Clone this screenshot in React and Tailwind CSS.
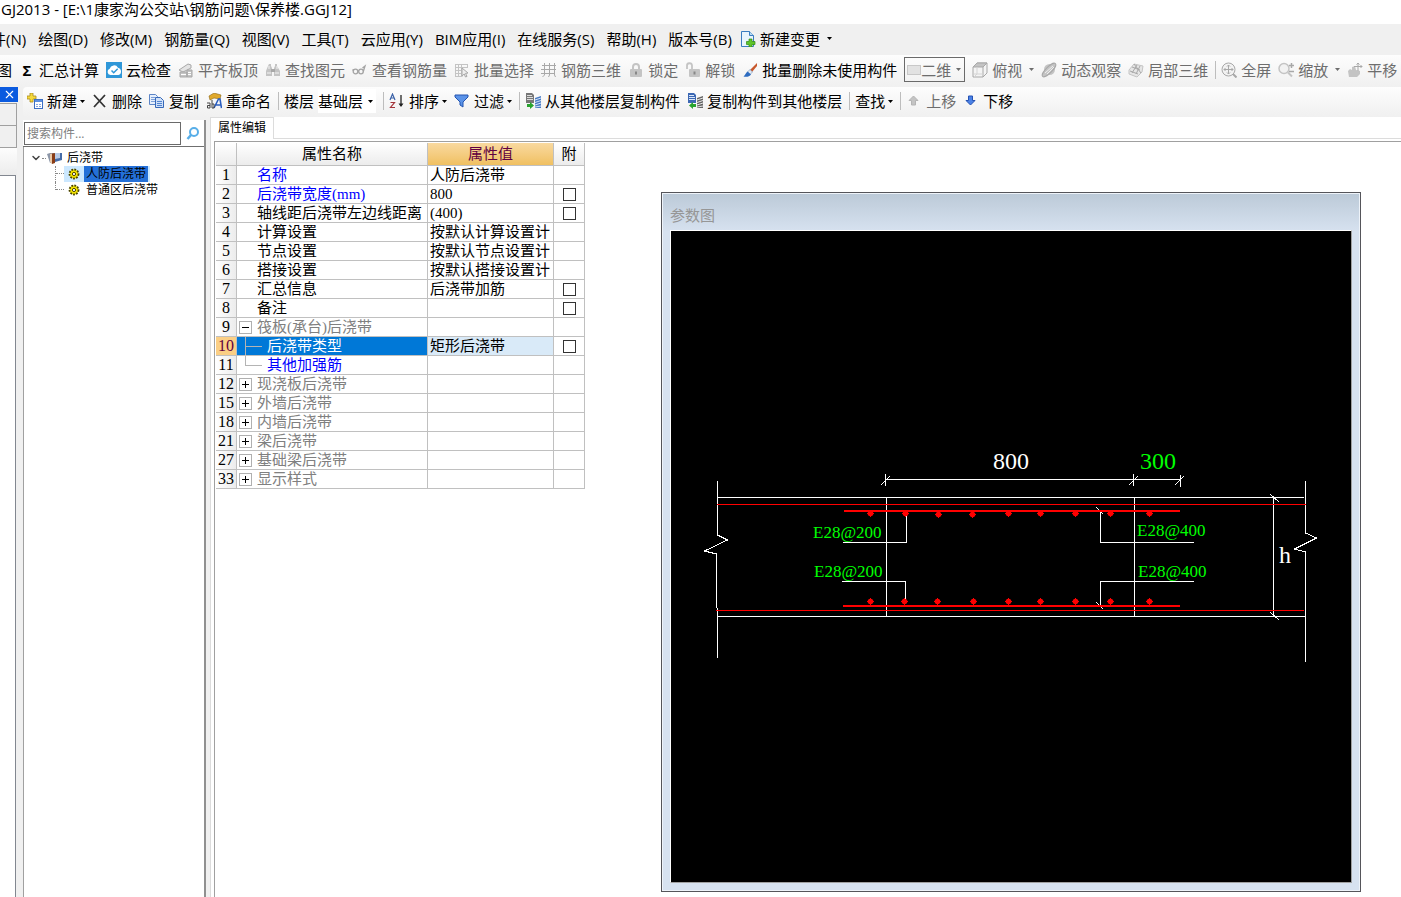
import { useState } from "react";
import { ChevronDown, X } from "lucide-react";

const MENUS = [
  "绘图(D)",
  "修改(M)",
  "钢筋量(Q)",
  "视图(V)",
  "工具(T)",
  "云应用(Y)",
  "BIM应用(I)",
  "在线服务(S)",
  "帮助(H)",
  "版本号(B)",
];

const ROWS = [
  { no: 1, name: "名称", value: "人防后浇带", color: "blue" },
  { no: 2, name: "后浇带宽度(mm)", value: "800", color: "blue", check: true },
  { no: 3, name: "轴线距后浇带左边线距离", value: "(400)", check: true },
  { no: 4, name: "计算设置", value: "按默认计算设置计" },
  { no: 5, name: "节点设置", value: "按默认节点设置计" },
  { no: 6, name: "搭接设置", value: "按默认搭接设置计" },
  { no: 7, name: "汇总信息", value: "后浇带加筋", check: true },
  { no: 8, name: "备注", value: "", check: true },
  { no: 9, name: "筏板(承台)后浇带", value: "", color: "gray", toggle: "-" },
  { no: 10, name: "后浇带类型", value: "矩形后浇带", child: true, check: true },
  { no: 11, name: "其他加强筋", value: "", color: "blue", child: true, last: true },
  { no: 12, name: "现浇板后浇带", value: "", color: "gray", toggle: "+" },
  { no: 15, name: "外墙后浇带", value: "", color: "gray", toggle: "+" },
  { no: 18, name: "内墙后浇带", value: "", color: "gray", toggle: "+" },
  { no: 21, name: "梁后浇带", value: "", color: "gray", toggle: "+" },
  { no: 27, name: "基础梁后浇带", value: "", color: "gray", toggle: "+" },
  { no: 33, name: "显示样式", value: "", color: "gray", toggle: "+" },
];

const NAME_COLORS = {
  blue: "text-[#0000ff]",
  gray: "text-[#808080]",
};

/* ---------- icons ---------- */

const G = "#c4c4c4";
const D = "#a8a8a8";

const ICONS = {
  cloud: (
    <>
      <rect width="16" height="16" fill="#2f97d8" />
      <path d="M4.5 13a3.2 3.2 0 0 1-.8-6.2A4.5 4.5 0 0 1 12 5.700a3.800 3.800 0 0 1 .5 7.300z" fill="#fff" />
      <path d="M5.500 8.500l2.200 2.200 4-4" fill="none" stroke="#2f97d8" strokeWidth="1.500" />
    </>
  ),
  align: (
    <>
      <path d="M1 8l9-6 3 1v3l-8 4z" fill="#e4e4e4" stroke={D} />
      <path d="M2 10h7v5H2zM9 8h5v7H9z" fill={G} stroke={D} />
      <path d="M3 12.500h5M10 10.500h3M10 12.500h3" stroke="#fff" />
    </>
  ),
  binoculars: (
    <>
      <path d="M4 2h2v2l1 2v8H1v-5l2-5zM10 2h2v2l3 5v5H9V6l1-2z" fill={G} />
      <path d="M6 7h4v3H6z" fill={D} />
      <path d="M2 11h4M10 11h4M4 4v3M12 4v3" stroke="#f4f4f4" />
    </>
  ),
  glasses: (
    <g fill="none" stroke="#a4a4a4" strokeWidth="1.300">
      <circle cx="3.500" cy="9.500" r="2.300" />
      <circle cx="9" cy="9.500" r="2.300" />
      <path d="M1.200 9V7M11.300 9.500L13 4l-2.500 2M6 9h1" />
    </g>
  ),
  gridPick: (
    <>
      <path d="M1.500 2.500h12M1.500 5.500h12M1.500 8.500h7M1.500 11.500h7M1.500 14.500h7M1.500 2v13M4.500 2v13M7.500 2v13M13.500 2v4" stroke={G} fill="none" />
      <path d="M8 6l6 5-2.500.4 1.500 3-1.500.6-1.300-3L8 14z" fill="#eee" stroke={D} />
    </>
  ),
  mesh: (
    <path d="M1 3.500h14M0 7.500h15M0 11.500h14M3.500 1v12l-2 2M8.500 1v12l-1 2M13.500 1v12l1 2" stroke={D} fill="none" />
  ),
  lock: (
    <>
      <path d="M5 8V5a3 3 0 0 1 6 0v3" fill="none" stroke={G} strokeWidth="2" />
      <rect x="2" y="7" width="12" height="8" rx="1" fill={G} />
      <path d="M8 9.500v3" stroke="#888" strokeWidth="2" />
    </>
  ),
  unlock: (
    <>
      <path d="M2 7V4a2.500 2.500 0 0 1 5-.500v4" fill="none" stroke={G} strokeWidth="1.800" />
      <rect x="4" y="7" width="11" height="8" rx="1" fill={G} />
      <path d="M9.500 9.500v3" stroke="#888" strokeWidth="2" />
    </>
  ),
  brush: (
    <>
      <path d="M15 1L8 8l2 2 5-6z" fill="#c8582c" />
      <path d="M8 7.500L10.500 10 8 12.500 5.500 10z" fill="#dfe8f2" stroke="#6f8fb5" strokeWidth=".6" />
      <path d="M5.500 9.500L9 12.500C7.500 15 4 15 1.500 14.500 3.500 13 3.500 11 5.500 9.500z" fill="#2d6cc0" />
    </>
  ),
  cube: (
    <>
      <path d="M1 5l4-4h10v10l-4 4H1z" fill="#f4f4f4" stroke={D} />
      <path d="M1 5l4-4h10l-4 4z" fill={G} stroke={D} />
      <path d="M11 5v10" stroke={D} />
      <path d="M5 5v7M2 12h9M5 12l-3 3" stroke="#d4d4d4" />
    </>
  ),
  orbit: (
    <>
      <circle cx="8.500" cy="7.500" r="5.500" fill={G} />
      <ellipse cx="8" cy="8" rx="9" ry="3" transform="rotate(-45 8 8)" fill={G} stroke={D} />
      <path d="M4 11l8-7M6 12l7-7" stroke="#eee" />
    </>
  ),
  partial: (
    <>
      <path d="M1 8l5-6 9 2-1 6-5 5-8-3z" fill="#e6e6e6" stroke={G} />
      <path d="M4 5l8 3M2 9l8 3M9 3l-5 8M12 4l-4 8M6 2l7 9" stroke={D} fill="none" />
    </>
  ),
  fullscreen: (
    <>
      <circle cx="7.500" cy="7.500" r="6.500" fill="#f2f2f2" stroke={D} />
      <path d="M7.500 3v9M3 7.500h9M6 4.500L7.500 3 9 4.500M6 10.500L7.500 12 9 10.500M4.500 6L3 7.500 4.500 9M10.500 6L12 7.500 10.500 9" stroke={D} fill="none" />
      <path d="M12 12l3.500 3.500" stroke={D} strokeWidth="2" />
    </>
  ),
  zoom: (
    <>
      <circle cx="6" cy="6.500" r="5" fill="#f2f2f2" stroke={G} strokeWidth="1.500" />
      <path d="M10 10.500l4 4" stroke={G} strokeWidth="2" />
      <path d="M11 3.500h5M13.500 1v5M11 9.500h5" stroke={D} strokeWidth="1.500" />
    </>
  ),
  pan: (
    <>
      <path d="M2 15l-1-6 2-2 2 1V5l3-1 1 4 4 1v3l-3 3z" fill={G} />
      <path d="M11 1v8M7 4.500h8M9.500 2.500L11 1l1.500 1.500M13.500 3L15 4.500 13.500 6" stroke={D} fill="none" />
    </>
  ),
  create: (
    <>
      <path d="M3 0h3v3h3v3H6v3H3V6H0V3h3z" fill="#f5d93c" stroke="#a98a1e" strokeWidth=".8" />
      <rect x="7.500" y="6.500" width="8" height="9" fill="#fff" stroke="#3b6fc4" />
      <path d="M8 7h7v2H8z" fill="#5b8fe0" />
      <path d="M9 11.500h2M12 11.500h2M9 13.500h2M12 13.500h2" stroke="#86a6dc" />
    </>
  ),
  remove: (
    <path d="M2 2l11 12M13 2L2 14" stroke="#333" strokeWidth="1.800" fill="none" />
  ),
  copy: (
    <>
      <path d="M.5 1.500h6l2 2v8h-8z" fill="#e6effb" stroke="#5c85c7" />
      <path d="M2 4.500h4M2 6.500h4M2 8.500h4" stroke="#7ca0da" />
      <path d="M6.500 4.500h5l3 3v7h-8z" fill="#cfe0f8" stroke="#3668b8" />
      <path d="M8 8.500h5M8 10.500h5M8 12.500h5" stroke="#5384cf" />
    </>
  ),
  rename: (
    <>
      <path d="M3 3l5-3 7 2-1 4-6-1-4 2z" fill="#e0a92d" stroke="#8c6412" strokeWidth=".6" />
      <path d="M8 15l4.500-9h1.500l1.500 9M10 12h5" stroke="#2c5fc0" strokeWidth="1.600" fill="none" />
      <path d="M1 10h3v5H1.500v-2.500H4M6 7v8h2v-4H6" stroke="#444" fill="none" />
    </>
  ),
  sort: (
    <>
      <path d="M1 7l2.500-6L6 7M2 5h3" stroke="#3b62a8" fill="none" strokeWidth="1.200" />
      <path d="M1.500 9.500h4l-4 5h4.500" stroke="#a3343a" fill="none" strokeWidth="1.200" />
      <path d="M12 2v11" stroke="#222" strokeWidth="1.300" />
      <path d="M9.500 10.500h5L12 14z" fill="#222" />
    </>
  ),
  filter: (
    <path d="M1 2h13v2L9 9v5l-3-2V9L1 4z" fill="#5b93e8" stroke="#2455b0" />
  ),
  fromFloor: (
    <>
      <path d="M1 0h6l2 2v8H1z" fill="#777" />
      <path d="M2 2.500h5M2 4.500h6M2 6.500h6" stroke="#ddd" />
      <path d="M2 11h3v-2l4 3.500-4 3.500v-2H2z" fill="#29a32f" />
      <path d="M10 5l6-2v12h-6z" fill="#4a7cc4" />
      <path d="M10 7l6-2M10 9.500l6-2M10 12l6-2M10 14l6-1" stroke="#d4e3f8" />
    </>
  ),
  toFloor: (
    <>
      <path d="M1 0h6l2 2v8H1z" fill="#3c68b4" />
      <path d="M2 2.500h5M2 4.500h6M2 6.500h6" stroke="#dce8fa" />
      <path d="M9 11H6V9l-4 3.500L6 16v-2h3z" fill="#29a32f" />
      <path d="M10 5l6-2v12h-6z" fill="#666" />
      <path d="M10 7l6-2M10 9.500l6-2M10 12l6-2M10 14l6-1" stroke="#e8e8e8" />
    </>
  ),
  up: <path d="M7.500 3L12 7.500H9.500V12h-4V7.500H3z" fill={G} stroke="#b4b4b4" />,
  down: <path d="M7.500 12L12 7.500H9.500V3h-4v4.500H3z" fill="#4b82e6" stroke="#2452b4" />,
  change: (
    <>
      <path d="M1.500.5h8l4 4v11h-12z" fill="#e8f4fd" stroke="#3a7cc0" />
      <path d="M9.500.5v4h4" fill="#b9dcf4" stroke="#3a7cc0" />
      <path d="M9 8h3v2.500h3v3h-3V16H9v-2.500H6.500v-3H9z" fill="#5fc42a" stroke="#2f8a12" strokeWidth=".7" />
    </>
  ),
  search: (
    <>
      <circle cx="9" cy="7" r="4" fill="none" stroke="#58aee8" strokeWidth="2" />
      <path d="M6 10l-3.500 4" stroke="#58aee8" strokeWidth="2.500" />
    </>
  ),
  band: (
    <>
      <path d="M0 4l3-1h4v9l-4 1z" fill="#8c96a8" />
      <path d="M3 4l5-1v10l-3 1z" fill="#8a3d16" />
      <path d="M3 4l2-.5V14l-2-2z" fill="#e9c9a8" />
      <path d="M8 3h7v7l-7 2z" fill="#456ca8" />
      <path d="M8 3h5v5l-5 1z" fill="#b9cbe6" />
    </>
  ),
  gear: (
    <>
      <circle cx="6" cy="6" r="4.500" fill="#f4e400" stroke="#4a4400" strokeWidth="1.800" strokeDasharray="1.800 1.200" />
      <circle cx="6" cy="6" r="1.600" fill="#fff" stroke="#4a4400" />
    </>
  ),
};

const Icon = ({ name, size = 16 }) => (
  <svg
    width={size}
    height={size}
    viewBox={size === 12 ? "0 0 12 12" : "0 0 16 16"}
    className="shrink-0"
    aria-hidden="true"
  >
    {ICONS[name]}
  </svg>
);

const Caret = () => (
  <svg width="5" height="3" viewBox="0 0 5 3" className="shrink-0" aria-hidden="true">
    <path d="M0 0h5L2.500 3z" fill="currentColor" />
  </svg>
);

/* ---------- toolbars ---------- */

const ToolButton = ({ icon, disabled, caret, wide, children }) => (
  <button
    type="button"
    disabled={disabled}
    className="flex items-center gap-1 shrink-0 whitespace-nowrap disabled:text-[#6d6d6d]"
  >
    {icon && <Icon name={icon} />}
    <span className={`flex items-center ${wide ? "gap-[7px]" : "gap-[3px]"}`}>
      {children}
      {caret && <Caret />}
    </span>
  </button>
);

const Separator = () => <span className="w-px h-[18px] -mr-0.5 shrink-0 bg-[#bdbdbd]" />;

const MenuBar = () => (
  <nav className="flex items-center gap-3 h-[31px] pb-0.5 bg-[#f0f0f0] whitespace-nowrap overflow-hidden">
    <button type="button" className="-ml-6 shrink-0">
      文件(N)
    </button>
    {MENUS.map((menu) => (
      <button type="button" key={menu} className="shrink-0">
        {menu}
      </button>
    ))}
    <button type="button" className="flex items-center gap-1 -ml-1 shrink-0">
      <Icon name="change" />
      <span className="flex items-center gap-[7px]">
        新建变更
        <Caret />
      </span>
    </button>
  </nav>
);

const ViewToolbar = () => (
  <div className="flex items-center gap-[7px] h-8 -ml-[3px] pb-[3px] bg-linear-to-b from-[#fdfdfd] to-[#f0f0f0] overflow-hidden">
    <ToolButton>图</ToolButton>
    <button type="button" className="flex items-center gap-1 shrink-0">
      <span className="w-4 text-center font-bold">Σ</span>
      汇总计算
    </button>
    <ToolButton icon="cloud">云检查</ToolButton>
    <ToolButton icon="align" disabled>平齐板顶</ToolButton>
    <ToolButton icon="binoculars" disabled>查找图元</ToolButton>
    <ToolButton icon="glasses" disabled>查看钢筋量</ToolButton>
    <ToolButton icon="gridPick" disabled>批量选择</ToolButton>
    <ToolButton icon="mesh" disabled>钢筋三维</ToolButton>
    <ToolButton icon="lock" disabled>锁定</ToolButton>
    <ToolButton icon="unlock" disabled>解锁</ToolButton>
    <ToolButton icon="brush">批量删除未使用构件</ToolButton>
    <div className="relative flex items-center w-[61px] h-[25px] shrink-0 border border-[#6a6a6a] text-[#6d6d6d]">
      <span className="w-[14px] h-[10px] ml-0.5 shrink-0 border border-[#c8c8c8] bg-[#e2e2e2]" />
      <select aria-label="视图模式" disabled className="appearance-none w-full bg-transparent outline-none">
        <option>二维</option>
      </select>
      <span className="absolute right-[3px] pointer-events-none">
        <Caret />
      </span>
    </div>
    <ToolButton icon="cube" disabled caret wide>俯视</ToolButton>
    <ToolButton icon="orbit" disabled>动态观察</ToolButton>
    <ToolButton icon="partial" disabled>局部三维</ToolButton>
    <Separator />
    <ToolButton icon="fullscreen" disabled>全屏</ToolButton>
    <ToolButton icon="zoom" disabled caret wide>缩放</ToolButton>
    <ToolButton icon="pan" disabled>平移</ToolButton>
  </div>
);

const ComponentToolbar = () => (
  <div className="flex items-center gap-[7px] h-[30px] pl-1 pb-0.5 rounded-l bg-linear-to-b from-[#fdfdfd] to-[#f0f0f0] overflow-hidden">
    <ToolButton icon="create" caret>新建</ToolButton>
    <ToolButton icon="remove">删除</ToolButton>
    <ToolButton icon="copy">复制</ToolButton>
    <ToolButton icon="rename">重命名</ToolButton>
    <Separator />
    <label className="flex items-center gap-1 shrink-0">
      楼层
      <span className="relative flex items-center w-[58px] h-6 bg-white">
        <select className="appearance-none w-full h-full outline-none">
          <option>基础层</option>
        </select>
        <span className="absolute right-[3px] pointer-events-none">
          <Caret />
        </span>
      </span>
    </label>
    <Separator />
    <ToolButton icon="sort" caret>排序</ToolButton>
    <ToolButton icon="filter" caret>过滤</ToolButton>
    <Separator />
    <ToolButton icon="fromFloor">从其他楼层复制构件</ToolButton>
    <ToolButton icon="toFloor">复制构件到其他楼层</ToolButton>
    <Separator />
    <ToolButton caret>查找</ToolButton>
    <Separator />
    <ToolButton icon="up" disabled>上移</ToolButton>
    <ToolButton icon="down">下移</ToolButton>
  </div>
);

/* ---------- panels ---------- */

const Dock = () => (
  <aside className="flex flex-col w-[18px] shrink-0">
    <button type="button" aria-label="关闭" className="flex items-center justify-center h-[15px] bg-[#0a5adf] text-white">
      <X size={13} strokeWidth={2} />
    </button>
    <div className="w-[17px] h-[22px] mt-px border-t border-r border-[#a0a0a0]" />
    <div className="w-[17px] h-[22px] border-t border-r border-[#a0a0a0]" />
    <div className="w-[17px] h-[28px] border-t border-[#a0a0a0] bg-linear-to-b from-[#fdfdfd] to-[#ececec]" />
    <div className="flex-1 w-4 border-t border-r border-[#828790] bg-white" />
  </aside>
);

const ComponentTree = () => {
  const [selected, setSelected] = useState("人防后浇带");

  return (
    <section className="flex flex-col w-[183px] mt-[3px] shrink-0 border-r-2 border-[#909090] bg-white text-xs">
      <div className="flex items-center h-[27px] pl-px shrink-0 border-b border-[#6f6f6f]">
        <input
          type="text"
          aria-label="搜索构件"
          placeholder="搜索构件..."
          className="w-[157px] h-[23px] px-0.5 border border-[#6a6a6a] bg-white outline-none placeholder:text-[#808080]"
        />
        <button type="button" aria-label="搜索" className="flex flex-1 items-center justify-center">
          <Icon name="search" />
        </button>
      </div>
      <div className="pt-[3px] pl-1.5 border-l border-[#a0a0a0] flex-1">
        <div className="flex items-center h-4">
          <ChevronDown size={12} strokeWidth={3} className="text-[#444]" />
          <span className="w-1 mr-px border-t border-dotted border-[#888]" />
          <Icon name="band" />
          <span className="ml-1">后浇带</span>
        </div>
        <ul className="ml-[25px]">
          {["人防后浇带", "普通区后浇带"].map((item, i) => (
            <li key={item} className="flex h-4">
              <span
                className={`w-px border-l border-dotted border-[#888] ${i === 0 ? "h-4" : "h-2"}`}
              />
              <span className="w-2 h-2 border-b border-dotted border-[#888]" />
              <button
                type="button"
                onClick={() => setSelected(item)}
                className={`flex items-center h-4 pl-1 pr-0.5 leading-4 ${
                  item === selected ? "bg-[#cce8ff]" : ""
                }`}
              >
                <Icon name="gear" size={12} />
                <span
                  className={`ml-1 px-0.5 ${item === selected ? "bg-[#2470d8]" : ""}`}
                >
                  {item}
                </span>
              </button>
            </li>
          ))}
        </ul>
      </div>
    </section>
  );
};

const PropertyRow = ({ row, active, onSelect }) => {
  const cell = "h-[19px] p-0 border-r border-b border-[#c0c0c0] font-normal";
  const nameColor = active ? "text-white" : NAME_COLORS[row.color] || "text-black";

  return (
    <tr onClick={() => onSelect(row.no)}>
      <th
        scope="row"
        className={`${cell} text-center text-base/[18px] ${
          active ? "bg-[#fbcf85] text-[#600040]" : "bg-linear-to-r from-white to-[#ececec]"
        }`}
      >
        {row.no}
      </th>
      <td className={`${cell} ${active ? "bg-[#0078d7]" : ""} ${nameColor}`}>
        <div className="flex items-center h-[18px]">
          {row.toggle && (
            <button
              type="button"
              aria-label={row.toggle === "+" ? "展开" : "折叠"}
              className="flex items-center justify-center w-[13px] h-[13px] ml-0.5 mr-[5px] border border-[#b0b0b0] bg-white text-black"
            >
              <svg width="7" height="7" viewBox="0 0 7 7" shapeRendering="crispEdges">
                <path d={row.toggle === "+" ? "M0 3h7v1H0zM3 0h1v7H3z" : "M0 3h7v1H0z"} />
              </svg>
            </button>
          )}
          {row.child && (
            <svg width="17" height="18" viewBox="0 0 17 18" className="ml-2 mr-[5px]" shapeRendering="crispEdges">
              <path
                d={row.last ? "M.5 0v9.500H17" : "M.5 0v18M.5 9.500H17"}
                fill="none"
                stroke="#b4b4b4"
              />
            </svg>
          )}
          <span className={`whitespace-nowrap ${row.toggle || row.child ? "" : "ml-5"}`}>
            {row.name}
          </span>
        </div>
      </td>
      <td className={`${cell} pl-0.5 whitespace-nowrap overflow-hidden ${active ? "bg-[#d9eaf8]" : ""}`}>
        {row.value}
      </td>
      <td className={cell}>
        {row.check && (
          <input
            type="checkbox"
            aria-label={`${row.name} 附加`}
            className="block appearance-none w-[13px] h-[13px] mx-auto border border-[#333] bg-white checked:bg-[#333]"
          />
        )}
      </td>
    </tr>
  );
};

const PropertyTable = () => {
  const [current, setCurrent] = useState(10);
  const head = "h-[23px] p-0 border-r border-b border-[#c0c0c0] font-normal";

  return (
    <table className="table-fixed w-[369px] border-separate border-spacing-0 font-['Liberation_Serif','Noto_Sans_CJK_SC',serif] text-[15px]/[18px]">
      <colgroup>
        <col className="w-[21px]" />
        <col className="w-[191px]" />
        <col className="w-[126px]" />
        <col className="w-[31px]" />
      </colgroup>
      <thead>
        <tr>
          <th className={`${head} bg-linear-to-b from-white to-[#ececec]`}></th>
          <th className={`${head} bg-linear-to-b from-white to-[#ececec]`}>属性名称</th>
          <th className={`${head} bg-linear-to-b from-[#f9d99f] to-[#f0c060] text-[#600040]`}>属性值</th>
          <th className={`${head} bg-linear-to-b from-white to-[#ececec]`}>附</th>
        </tr>
      </thead>
      <tbody>
        {ROWS.map((row) => (
          <PropertyRow key={row.no} row={row} active={row.no === current} onSelect={setCurrent} />
        ))}
      </tbody>
    </table>
  );
};

/* ---------- parameter drawing ---------- */

const TOP_BARS = [870, 905, 938, 972, 1008, 1040, 1075, 1110, 1149];
const BOTTOM_BARS = [870, 904, 937, 973, 1008, 1040, 1075, 1110, 1149];

const Bar = ({ x, y }) => (
  <g>
    <circle cx={x + 0.5} cy={y + 0.5} r="2.800" fill="#f00" />
    <path d={`M${x - 3} ${y + 0.5}h7M${x + 0.5} ${y - 3}v7`} stroke="#f00" />
  </g>
);

const SectionDrawing = () => (
  <svg viewBox="671 231 680 651" className="block w-full h-full bg-black" fill="none">
    <g stroke="#fff" shapeRendering="crispEdges">
      {/* slab outline and strip edges */}
      <path d="M717 497.500H1304M717 616.500H1305M886.500 497v119M1134.500 497v119" />
      {/* break lines */}
      <path d="M717.500 481v54l10 5-23 11 12 3v53l1 2v49" />
      <path d="M1305.500 481v52l11 5-22 11 11 3v110" />
      {/* dimensions */}
      <path d="M886 479.500h295M885.500 474v12M1133.500 474v12M1180.500 475v12" />
      <path d="M881 485l9-9M1129 485l9-9M1175 485l9-9" />
      <path d="M1273.500 497v119M1270 494l9 8M1270 612l9 8" />
      {/* leaders */}
      <path d="M843 542.500h63.500V514M842 581.500h63.500V600" />
      <path d="M1194 542.500h-93.500V510M1194 581.500h-93.500V606M1096 507l7 7M1096 602l7 7" />
    </g>
    <g stroke="#f00" shapeRendering="crispEdges">
      <path d="M717 504.500H1306M716 610.500H1304" />
      <path d="M844 511H1180M843 606H1180" strokeWidth="2" />
    </g>
    {TOP_BARS.map((x, i) => (
      <Bar key={x} x={x} y={i === 2 || i === 3 ? 514 : 513} />
    ))}
    {BOTTOM_BARS.map((x) => (
      <Bar key={x} x={x} y={601} />
    ))}
    <g className="font-['Liberation_Serif',serif]" fontSize="24" fill="#fff">
      <text x="993" y="469">800</text>
      <text x="1140" y="469" fill="#0f0">300</text>
      <text x="1279" y="563">h</text>
    </g>
    <g className="font-['Liberation_Serif',serif]" fontSize="17" fill="#0f0">
      <text x="813" y="538">E28@200</text>
      <text x="814" y="577">E28@200</text>
      <text x="1137" y="536">E28@400</text>
      <text x="1138" y="577">E28@400</text>
    </g>
  </svg>
);

const ParameterWindow = () => (
  <div className="absolute left-[450px] top-[75px] flex flex-col w-[700px] h-[700px] border border-[#55555a] bg-[#d7e2f0]">
    <div className="flex flex-col flex-1 min-h-0 px-[7px] pb-[7px] border border-[#eef3f9] bg-linear-to-b from-[#bccad8] to-[#d7e2f0] to-[38px]">
      <h2 className="h-[36px] pt-[11px] text-[#969696] leading-5">参数图</h2>
      <div className="flex-1 min-h-0 border border-t-white border-l-white border-r-[#a0a0a0] border-b-[#a0a0a0]">
        <SectionDrawing />
      </div>
    </div>
  </div>
);

const Editor = () => (
  <main className="relative flex flex-col flex-1 min-w-0 ml-1 border-l border-[#dcdcdc] bg-white">
    <div className="flex h-[22px] shrink-0">
      <button type="button" className="w-[63px] h-[22px] pb-0.5 border-t border-r border-[#dcdcdc] text-xs">
        属性编辑
      </button>
      <div className="flex-1 border-b border-[#dcdcdc]" />
    </div>
    <div className="flex-1 mt-0.5 ml-[3px] pl-px pt-px border-t border-l border-[#a0a0a0]">
      <PropertyTable />
    </div>
    <ParameterWindow />
  </main>
);

const App = () => {
  return (
    <div className="flex flex-col h-screen overflow-hidden bg-[#f0f0f0] text-black font-['Open_Sans','Noto_Sans_CJK_SC',sans-serif] text-[15px]/5">
      <header className="h-6 pl-px bg-white whitespace-nowrap leading-[18px]">
        GJ2013 - [E:\1康家沟公交站\钢筋问题\保养楼.GGJ12]
      </header>
      <MenuBar />
      <ViewToolbar />
      <div className="flex flex-1 min-h-0">
        <Dock />
        <div className="flex flex-col flex-1 min-w-0 ml-[5px]">
          <ComponentToolbar />
          <div className="flex flex-1 min-h-0">
            <ComponentTree />
            <Editor />
          </div>
        </div>
      </div>
    </div>
  );
};

export default App;
